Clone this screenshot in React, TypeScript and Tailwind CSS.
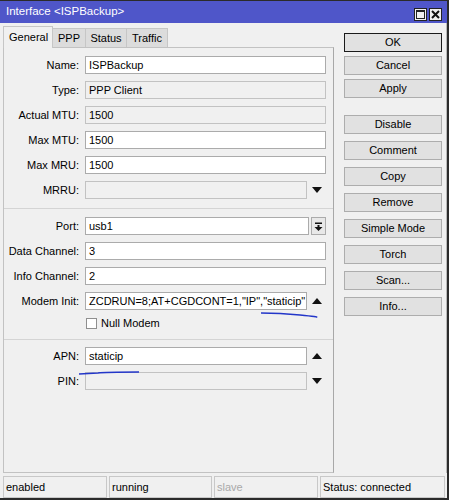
import React from "react";

const font = "font-['Liberation_Sans',Arial,sans-serif]";

function UpArrow() {
  return (
    <svg width="10" height="6" viewBox="0 0 10 6" aria-hidden>
      <polygon points="0,6 10,6 5,0" fill="#111" />
    </svg>
  );
}

function DownArrow() {
  return (
    <svg width="10" height="6" viewBox="0 0 10 6" aria-hidden>
      <polygon points="0,0 10,0 5,6" fill="#111" />
    </svg>
  );
}

type RowProps = {
  label: string;
  value?: string;
  disabled?: boolean;
  arrow?: "up" | "down";
  dropdown?: boolean;
};

function Row({ label, value = "", disabled, arrow, dropdown }: RowProps) {
  const narrow = arrow || dropdown;
  return (
    <div className="flex items-center h-[18px]">
      <div className="w-[75px] text-right whitespace-nowrap">{label}</div>
      <div
        className={`ml-[6px] h-[18px] flex items-center pl-[3px] overflow-hidden whitespace-nowrap border ${
          disabled ? "bg-[#f0f0f0] border-[#c2c2c2]" : "bg-white border-[#ababab]"
        } ${arrow ? "w-[222px]" : dropdown ? "w-[224px]" : "w-[241px]"}`}
      >
        {value}
      </div>
      {arrow && (
        <div className="w-[19px] flex items-center pl-[5px]">
          {arrow === "up" ? <UpArrow /> : <DownArrow />}
        </div>
      )}
      {dropdown && (
        <div className="ml-[2px] w-[15px] h-[18px] border border-[#ababab] bg-[#e8e8e8] flex items-center justify-center">
          <svg width="9" height="9" viewBox="0 0 9 9" aria-hidden>
            <rect x="1" y="0.5" width="7" height="1.5" fill="#111" />
            <rect x="3.5" y="3" width="2" height="2" fill="#111" />
            <polygon points="0.5,5 8.5,5 4.5,9" fill="#111" />
          </svg>
        </div>
      )}
      {!narrow && <div className="w-0" />}
    </div>
  );
}

function Separator() {
  return <div className="h-[2px] border-t border-[#d4d4d4] border-b-white" />;
}

const buttonsTop = ["OK", "Cancel", "Apply"];
const buttonsBottom = ["Disable", "Comment", "Copy", "Remove", "Simple Mode", "Torch", "Scan...", "Info..."];

function Btn({ label, primary }: { label: string; primary?: boolean }) {
  return (
    <div
      className={`w-[98px] h-[19px] flex items-center justify-center bg-[#e1e1e1] border ${
        primary ? "border-[#1a1a1a]" : "border-[#adadad]"
      }`}
    >
      {label}
    </div>
  );
}

export default function App() {
  return (
    <div className={`relative w-[452px] h-[502px] bg-white overflow-hidden text-[11px] text-black ${font}`}>
      <div className="w-[449px] h-[500px] flex flex-col border-t border-r-2 border-b-2 border-[#2b2b2b] bg-[#f0f0f0]">
        {/* title bar */}
        <div className="h-[22px] bg-[#4f56c9] flex items-center justify-between pl-[6px] pr-[5px]">
          <span className="text-white text-[11.5px]">Interface &lt;ISPBackup&gt;</span>
          <div className="flex gap-[2px] mt-[5px]">
            <div className="w-[13px] h-[13px] bg-[#f0f0f0] border border-[#222] flex items-center justify-center">
              <div className="w-[9px] h-[9px] border border-[#222] border-t-2" />
            </div>
            <div className="w-[13px] h-[13px] bg-[#f0f0f0] border border-[#222] flex items-center justify-center">
              <svg width="9" height="9" viewBox="0 0 9 9" aria-hidden>
                <path d="M1 1 L8 8 M8 1 L1 8" stroke="#111" strokeWidth="2" />
              </svg>
            </div>
          </div>
        </div>

        <div className="flex flex-1 border-r border-[#b8b8b8]">
          {/* left column */}
          <div className="ml-[3px] w-[331px] flex flex-col">
            <div className="h-[24px] flex items-end">
              <div className="w-[50px] h-[22px] border border-b-0 border-[#c6c6c6] bg-[#f0f0f0] flex items-center pl-[5px] -mb-px relative z-10">
                General
              </div>
              <div className="w-[33px] h-[19px] border border-b-0 border-l-0 border-[#c6c6c6] bg-[#dcdcdc] flex items-center justify-center">
                PPP
              </div>
              <div className="w-[41px] h-[19px] border border-b-0 border-l-0 border-[#c6c6c6] bg-[#dcdcdc] flex items-center justify-center">
                Status
              </div>
              <div className="w-[41px] h-[19px] border border-b-0 border-l-0 border-[#c6c6c6] bg-[#dcdcdc] flex items-center justify-center">
                Traffic
              </div>
            </div>

            <div className="flex-1 border border-[#c2c2c2] border-r-[#a8a8a8] flex flex-col pt-[8px]">
              <div className="flex flex-col gap-[7px]">
                <Row label="Name:" value="ISPBackup" />
                <Row label="Type:" value="PPP Client" disabled />
                <Row label="Actual MTU:" value="1500" disabled />
                <Row label="Max MTU:" value="1500" />
                <Row label="Max MRU:" value="1500" />
                <Row label="MRRU:" disabled arrow="down" />
              </div>
              <div className="mt-[9px] mb-[7px]">
                <Separator />
              </div>
              <div className="flex flex-col gap-[7px]">
                <Row label="Port:" value="usb1" dropdown />
                <Row label="Data Channel:" value="3" />
                <Row label="Info Channel:" value="2" />
                <Row label="Modem Init:" value={'ZCDRUN=8;AT+CGDCONT=1,"IP","staticip"'} arrow="up" />
              </div>
              <div className="mt-[7px] h-[13px] flex items-center pl-[82px] gap-[4px]">
                <div className="w-[11px] h-[11px] bg-white border border-[#8f8f8f]" />
                <span>Null Modem</span>
              </div>
              <div className="mt-[9px] mb-[6px]">
                <Separator />
              </div>
              <div className="flex flex-col gap-[7px]">
                <Row label="APN:" value="staticip" arrow="up" />
                <Row label="PIN:" disabled arrow="down" />
              </div>
            </div>
          </div>

          {/* right column */}
          <div className="ml-[10px] pt-[10px] flex flex-col">
            <div className="flex flex-col gap-[4px]">
              {buttonsTop.map((b, i) => (
                <Btn key={b} label={b} primary={i === 0} />
              ))}
            </div>
            <div className="mt-[17px] flex flex-col gap-[7px]">
              {buttonsBottom.map((b) => (
                <Btn key={b} label={b} />
              ))}
            </div>
          </div>
        </div>

        {/* status bar */}
        <div className="mt-[3px] h-[22px] flex gap-[2px] pl-[3px] pr-[2px]">
          <div className="w-[104px] border border-[#c8c8c8] flex items-center pl-[2px]">enabled</div>
          <div className="w-[103px] border border-[#c8c8c8] flex items-center pl-[2px]">running</div>
          <div className="w-[104px] border border-[#c8c8c8] flex items-center pl-[2px] text-[#a9a9a9]">slave</div>
          <div className="flex-1 border border-[#c8c8c8] flex items-center pl-[2px]">Status: connected</div>
        </div>
      </div>

      {/* hand-drawn blue underlines */}
      <svg className="absolute inset-0 pointer-events-none" width="452" height="502" aria-hidden>
        <path d="M261 313 Q280 313 300 315 T316 317" stroke="#2336c9" strokeWidth="1.5" fill="none" />
        <path d="M79 374 L98 373 Q104 372 139 372" stroke="#2336c9" strokeWidth="1.5" fill="none" />
      </svg>
    </div>
  );
}
